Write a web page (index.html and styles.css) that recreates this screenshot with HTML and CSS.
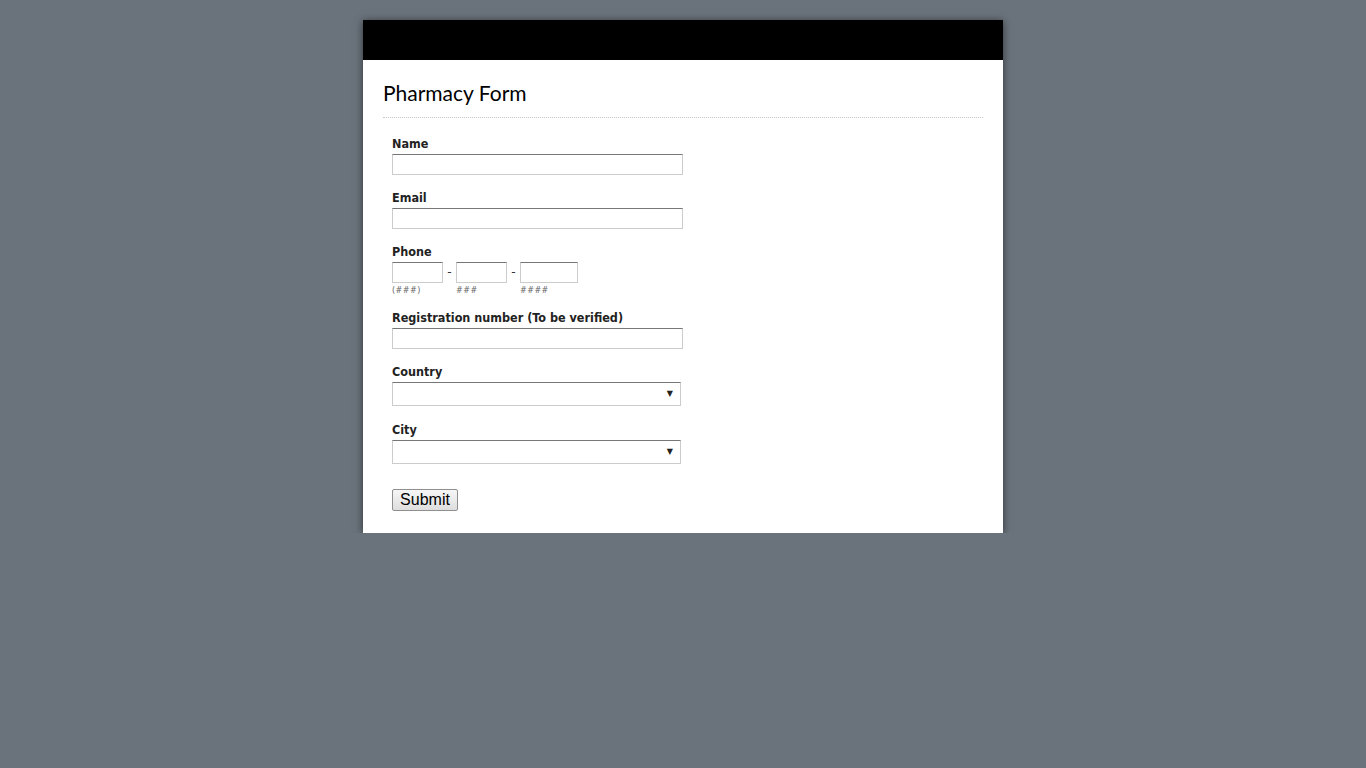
FILE: index.html
```html
<!DOCTYPE html>
<html lang="en">
<head>
<meta charset="utf-8">
<title>Pharmacy Form</title>
<link rel="stylesheet" href="styles.css">
</head>
<body>
<div class="card">
  <div class="topbar"></div>
  <div class="content">
    <h1 class="title">Pharmacy Form</h1>
    <form class="form">
      <div class="group">
        <label class="label">Name</label>
        <input class="text" type="text">
      </div>
      <div class="group">
        <label class="label">Email</label>
        <input class="text" type="text">
      </div>
      <div class="group group-phone">
        <label class="label">Phone</label>
        <div class="phone">
          <div class="pcol">
            <input class="text p3" type="text">
            <span class="hint">(###)</span>
          </div>
          <span class="dash">-</span>
          <div class="pcol">
            <input class="text p3" type="text">
            <span class="hint">###</span>
          </div>
          <span class="dash">-</span>
          <div class="pcol">
            <input class="text p4" type="text">
            <span class="hint">####</span>
          </div>
        </div>
      </div>
      <div class="group">
        <label class="label">Registration number (To be verified)</label>
        <input class="text" type="text">
      </div>
      <div class="group group-sel">
        <label class="label">Country</label>
        <div class="selwrap"><select class="sel"><option></option></select><span class="arrow">&#9660;</span></div>
      </div>
      <div class="group group-sel">
        <label class="label">City</label>
        <div class="selwrap"><select class="sel"><option></option></select><span class="arrow">&#9660;</span></div>
      </div>
      <div class="actions">
        <button type="button" class="btn">Submit</button>
      </div>
    </form>
  </div>
</div>
</body>
</html>
```
FILE: styles.css
```css
html, body {
  margin: 0;
  padding: 0;
}
body {
  background: #6a727b;
  padding-top: 20px;
  font-family: "DejaVu Sans", Verdana, sans-serif;
}
.card {
  width: 640px;
  margin: 0 auto;
  background: #fff;
  box-shadow: 0 1px 8px rgba(0,0,0,0.55);
}
.topbar {
  height: 40px;
  background: #000;
}
.content {
  padding: 0 20px 22px 20px;
}
.title {
  margin: 0;
  padding: 19px 0 10px 0;
  font-family: Lato, "Open Sans", sans-serif;
  font-weight: 400;
  font-size: 21px;
  line-height: 28px;
  color: #000;
  border-bottom: 1px dotted #c8c8c8;
}
.form {
  padding: 18px 9px 0 9px;
}
.group {
  margin-bottom: 15px;
}
.group-phone {
  margin-bottom: 14px;
}
.group-sel {
  margin-bottom: 16px;
}
.label {
  display: block;
  font-family: "DejaVu Sans Condensed", "DejaVu Sans", Verdana, sans-serif;
  font-stretch: condensed;
  font-weight: bold;
  font-size: 12.5px;
  line-height: 16px;
  color: #222;
  margin-bottom: 2px;
}
.text {
  box-sizing: border-box;
  display: block;
  width: 291px;
  height: 21px;
  margin: 0;
  padding: 1px 3px;
  border: 1px solid #ccc;
  border-top-color: #777;
  background: #fff;
  font-size: 12px;
  outline: none;
}
.phone {
  display: flex;
  align-items: flex-start;
}
.pcol {
  display: flex;
  flex-direction: column;
}
.p3 { width: 51px; }
.p4 { width: 58px; }
.dash {
  width: 13px;
  text-align: center;
  font-size: 12px;
  line-height: 21px;
  color: #333;
}
.hint {
  margin-top: 2px;
  font-size: 8px;
  line-height: 11px;
  color: #666;
  letter-spacing: 0.5px;
}
.selwrap {
  position: relative;
  width: 289px;
  height: 24px;
}
.sel {
  -webkit-appearance: none;
  appearance: none;
  box-sizing: border-box;
  width: 289px;
  height: 24px;
  margin: 0;
  border: 1px solid #ccc;
  border-top-color: #777;
  border-radius: 0;
  background: #fff;
  font-size: 12px;
  outline: none;
}
.arrow {
  position: absolute;
  right: 8px;
  top: 7px;
  font-size: 8px;
  line-height: 10px;
  color: #222;
  pointer-events: none;
}
.actions {
  padding-top: 9px;
}
.btn {
  box-sizing: border-box;
  width: 66px;
  height: 22px;
  padding: 0;
  font-family: "Liberation Sans", Arial, sans-serif;
  font-size: 16px;
  color: #000;
  border: 1px solid #8f8f8f;
  border-radius: 2px;
  background: linear-gradient(#f6f6f6, #dedede);
}
```
